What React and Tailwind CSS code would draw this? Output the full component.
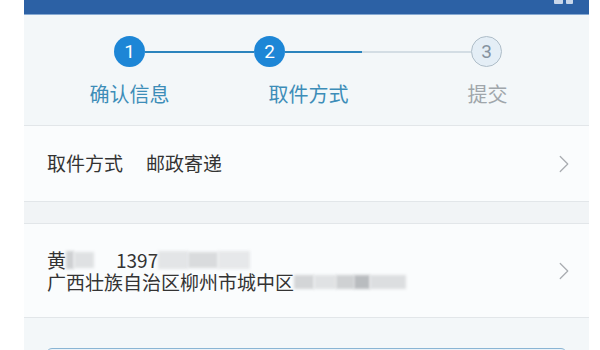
import { ChevronRight } from 'lucide-react'

const cjk = { fontFamily: '"Noto Sans CJK SC", "Noto Sans", sans-serif' }

function Blur({ className }) {
  return <span className={`inline-block align-middle blur-[1.5px] ${className}`} />
}

function Dot({ n, done }) {
  const base = 'w-[31px] h-[31px] shrink-0 rounded-full text-[19px] leading-none flex items-center justify-center font-["Roboto","Liberation_Sans",sans-serif]'
  return done ? (
    <div className={`${base} bg-[#1d86d6] text-white`}>{n}</div>
  ) : (
    <div className={`${base} border-[1.5px] border-[#aebdc8] bg-[#e4eef6] text-[#8593a0]`}>{n}</div>
  )
}

export default function App() {
  return (
    <div className="w-[600px] h-[350px] overflow-hidden bg-white flex" style={cjk}>
      <div className="ml-[24px] w-[565px] h-full flex flex-col bg-[#f3f7f9]">
        {/* status bar strip */}
        <div className="h-[15px] shrink-0 bg-[#2c61a5] border-b border-[#86a9d2] flex justify-end items-start pr-[16px] gap-[3px]">
          <span className="w-[9px] h-[4px] bg-[#c9d7ea] rounded-b-[1px]" />
          <span className="w-[7px] h-[4px] bg-[#c9d7ea] rounded-b-[1px]" />
        </div>

        {/* steps */}
        <div className="h-[110px] shrink-0 flex flex-col">
          <div className="mt-[21px] ml-[90px] w-[388px] flex items-center">
            <Dot n="1" done />
            <div className="flex-1 h-[2px] bg-[#2b84bd]" />
            <Dot n="2" done />
            <div className="w-[77px] h-[2px] bg-[#2b84bd]" />
            <div className="flex-1 h-[2px] bg-[#d3dde4]" />
            <Dot n="3" />
          </div>
          <div className="mt-[13px] ml-[16px] grid grid-cols-[179px_179px_179px] text-[20px] leading-[28px]">
            <div className="text-center text-[#3d8db8]">确认信息</div>
            <div className="text-center text-[#3d8db8]">取件方式</div>
            <div className="text-center text-[#a0a6ab]">提交</div>
          </div>
        </div>

        {/* pickup method */}
        <div className="h-[77px] shrink-0 border-y border-[#e2e6e9] bg-[#fafcfd] flex items-center pl-[23px] pr-[10px] text-[19px] text-[#333]">
          <span>取件方式</span>
          <span className="ml-[23px]">邮政寄递</span>
          <ChevronRight size={30} strokeWidth={1} className="ml-auto text-[#a9adb1]" />
        </div>

        <div className="h-[21px] shrink-0 bg-[#f1f4f6]" />

        {/* address */}
        <div className="h-[95px] shrink-0 border-y border-[#e2e6e9] bg-[#fafcfd] flex items-center pl-[23px] pr-[10px] text-[19px] text-[#333]">
          <div className="flex flex-col leading-[22px] pt-[1px]">
            <div className="flex items-center h-[22px]">
              <span>黄</span>
              <Blur className="w-[8px] h-[18px] bg-[#cfd1d3]" />
              <Blur className="w-[20px] h-[16px] bg-[#dfe1e3]" />
              <span className="ml-[22px]">1397</span>
              <Blur className="w-[30px] h-[18px] bg-[#e3e5e7]" />
              <Blur className="w-[30px] h-[16px] bg-[#d9dbdd]" />
              <Blur className="w-[32px] h-[18px] bg-[#e6e8ea]" />
            </div>
            <div className="flex items-center h-[22px]">
              <span>广西壮族自治区柳州市城中区</span>
              <Blur className="w-[20px] h-[14px] bg-[#d3d5d7]" />
              <Blur className="w-[22px] h-[14px] bg-[#e0e2e4]" />
              <Blur className="w-[18px] h-[14px] bg-[#cfd1d3]" />
              <Blur className="w-[16px] h-[14px] bg-[#b9bcbf]" />
              <Blur className="w-[36px] h-[14px] bg-[#dcdee0]" />
            </div>
          </div>
          <ChevronRight size={30} strokeWidth={1} className="ml-auto text-[#a9adb1]" />
        </div>

        <div className="h-[30px] shrink-0" />

        {/* bottom button edge */}
        <div className="mx-[22px] h-[40px] shrink-0 rounded-[6px] border-[1.5px] border-[#8ab5d4] bg-[#eaf3f9]" />
      </div>
    </div>
  )
}
